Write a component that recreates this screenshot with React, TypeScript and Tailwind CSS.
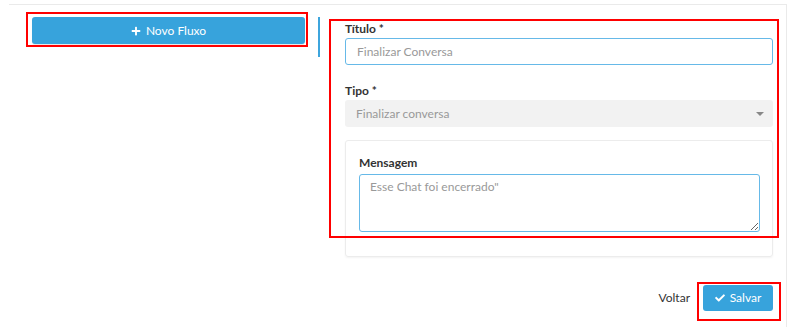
import { FaPlus, FaCheck } from "react-icons/fa";

export default function App() {
  return (
    <div className="relative w-[800px] h-[327px] bg-white overflow-hidden font-['Lato','Open_Sans',sans-serif] text-[12px] text-[#333]">
      <div className="ml-[9px] mt-[4px] w-[778px] h-[323px] border-t border-r border-[#eaeaea] flex flex-col">
        <div className="flex">
          {/* left column */}
          <div className="pl-[23px] pt-[12px]">
            <button className="w-[273px] h-[27px] rounded-[3px] bg-[#37a3dc] text-white text-[12px] flex items-center justify-center gap-[5px] shadow-[0_1px_1px_rgba(0,0,0,0.1)]">
              <FaPlus className="w-[10px] h-[10px]" />
              Novo Fluxo
            </button>
          </div>

          <div className="ml-[13px] mt-[12px] w-[2px] h-[40px] bg-[#3da5dd]" />

          {/* form */}
          <div className="ml-[25px] w-[428px] pt-[15px]">
            <label className="block font-bold leading-[17px] mb-[1px]">Título *</label>
            <input
              readOnly
              placeholder="Finalizar Conversa"
              className="w-full h-[27px] px-[11px] rounded-[3px] border border-[#66b9e8] bg-white text-[12px] placeholder:text-[#999] outline-none"
            />

            <label className="block font-bold leading-[17px] mt-[17px] mb-[1px]">Tipo *</label>
            <div className="relative w-full h-[27px] px-[11px] rounded-[3px] bg-[#f2f2f2] flex items-center text-[#999]">
              Finalizar conversa
              <span className="absolute right-[9px] top-[12px] w-0 h-0 border-l-[4px] border-r-[4px] border-t-[4px] border-l-transparent border-r-transparent border-t-[#888]" />
            </div>

            <div className="mt-[13px] h-[117px] rounded-[3px] border border-[#ececec] shadow-[0_1px_2px_rgba(0,0,0,0.05)] pt-[13px] pl-[13px] pr-[12px]">
              <label className="block font-bold leading-[17px] mb-[3px]">Mensagem</label>
              <textarea
                readOnly
                placeholder={'Esse Chat foi encerrado"'}
                className="block w-full h-[58px] px-[10px] py-[3px] rounded-[3px] border border-[#66b9e8] text-[12px] placeholder:text-[#999] outline-none"
              />
            </div>
          </div>
        </div>

        {/* footer */}
        <div className="mt-[28px] flex items-center justify-end pr-[13px] gap-[13px]">
          <span className="text-[12px] text-[#333]">Voltar</span>
          <button className="w-[70px] h-[26px] rounded-[3px] bg-[#37a3dc] text-white text-[12px] flex items-center justify-center gap-[5px]">
            <FaCheck className="w-[10px] h-[10px]" />
            Salvar
          </button>
        </div>
      </div>

      {/* annotation outlines */}
      <div className="absolute left-[26px] top-[12px] w-[282px] h-[35px] border-2 border-[#f00]" />
      <div className="absolute left-[329px] top-[19px] w-[450px] h-[219px] border-2 border-[#f00]" />
      <div className="absolute left-[697px] top-[282px] w-[84px] h-[39px] border-2 border-[#f00]" />
    </div>
  );
}
